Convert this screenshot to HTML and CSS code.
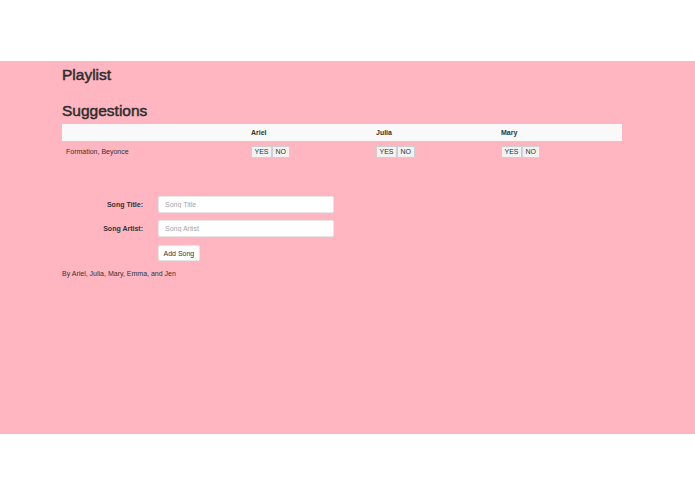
FILE: index.html
```html
<!DOCTYPE html>
<html>
<head>
<meta charset="utf-8">
<title>Playlist</title>
<link rel="stylesheet" href="styles.css">
</head>
<body>
<div class="page">
  <div class="container">
    <h1 class="title">Playlist</h1>
    <h2 class="subtitle">Suggestions</h2>
    <table class="votes">
      <thead>
        <tr><th class="song-col"></th><th>Ariel</th><th>Julia</th><th>Mary</th></tr>
      </thead>
      <tbody>
        <tr>
          <td class="song-col">Formation, Beyonce</td>
          <td><span class="btn-group"><button class="vote">YES</button><button class="vote">NO</button></span></td>
          <td><span class="btn-group"><button class="vote">YES</button><button class="vote">NO</button></span></td>
          <td><span class="btn-group"><button class="vote">YES</button><button class="vote">NO</button></span></td>
        </tr>
      </tbody>
    </table>
    <form class="song-form">
      <label class="form-label" for="title">Song Title:</label>
      <input class="form-input" id="title" type="text" placeholder="Song Title">
      <label class="form-label" for="artist">Song Artist:</label>
      <input class="form-input" id="artist" type="text" placeholder="Song Artist">
      <span></span>
      <div><button class="add-btn" type="button">Add Song</button></div>
    </form>
    <p class="credits">By Ariel, Julia, Mary, Emma, and Jen</p>
  </div>
</div>
</body>
</html>
```

FILE: styles.css
```css
html, body {
  margin: 0;
  padding: 0;
  background: #ffffff;
}
body {
  font-family: "Liberation Sans", Arial, Helvetica, sans-serif;
  font-size: 7px;
  color: #333333;
}
.page {
  margin-top: 61px;
  height: 373px;
  background: #ffb6c1;
}
.container {
  padding-left: 62px;
  width: 560px;
}
.title {
  margin: 0;
  padding-top: 5px;
  font-size: 15.5px;
  line-height: 18px;
  font-weight: normal;
  color: #2e2e2e;
  -webkit-text-stroke: 0.5px #2e2e2e;
}
.subtitle {
  margin: 18px 0 4px;
  font-size: 15.5px;
  line-height: 18px;
  font-weight: normal;
  color: #2e2e2e;
  -webkit-text-stroke: 0.5px #2e2e2e;
}
.votes {
  width: 560px;
  border-collapse: collapse;
  table-layout: fixed;
}
.votes th {
  background: #f9f9f9;
  height: 17px;
  padding: 0 4px;
  text-align: left;
  font-weight: bold;
  font-size: 7px;
}
.votes td {
  padding: 4px 4px;
  height: 13px;
  font-size: 7px;
}
.votes .song-col {
  width: 177px;
}
.btn-group {
  display: inline-flex;
}
.vote {
  font-family: inherit;
  font-size: 7px;
  color: #333;
  background: #f2f2f2;
  border: 1px solid #cfcfcf;
  height: 12px;
  padding: 0 2.5px;
  margin: 0;
  line-height: 10px;
}
.song-form {
  display: grid;
  grid-template-columns: 81px 176px;
  column-gap: 15px;
  row-gap: 7px;
  margin-top: 34px;
  align-items: center;
}
.form-label {
  text-align: right;
  font-weight: bold;
  font-size: 7px;
}
.form-input {
  box-sizing: border-box;
  height: 17px;
  margin: 0;
  border: 1px solid #e6e6e6;
  border-radius: 2px;
  background: #fff;
  padding: 0 6px;
  font-family: inherit;
  font-size: 7px;
}
.form-input::placeholder {
  color: #a6a6a6;
}
.add-btn {
  margin-top: 1px;
  box-sizing: border-box;
  height: 16px;
  padding: 0 4.5px;
  background: #fff;
  border: 1px solid #e6e6e6;
  border-radius: 2px;
  font-family: inherit;
  font-size: 7px;
  color: #333;
}
.credits {
  margin: 8px 0 0;
  font-size: 7px;
  line-height: 9px;
}
```
